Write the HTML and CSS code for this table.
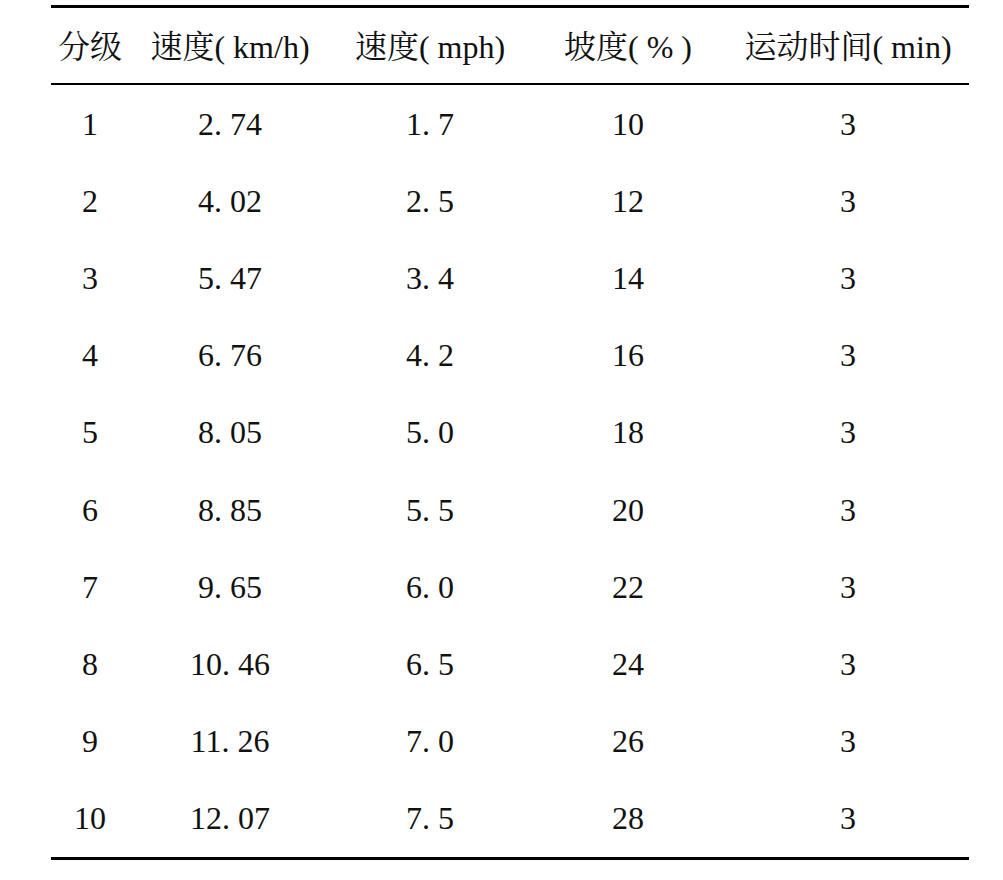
FILE: index.html
```html
<!DOCTYPE html>
<html lang="zh">
<head>
<meta charset="utf-8">
<title>分级运动方案</title>
<link rel="stylesheet" href="styles.css">
</head>
<body>
<table class="grade-table">
  <colgroup>
    <col class="c1"><col class="c2"><col class="c3"><col class="c4"><col class="c5">
  </colgroup>
  <thead>
    <tr>
      <th>分级</th>
      <th>速度<span class="latin">( km/h)</span></th>
      <th>速度<span class="latin">( mph)</span></th>
      <th>坡度<span class="latin">( % )</span></th>
      <th>运动时间<span class="latin">( min)</span></th>
    </tr>
  </thead>
  <tbody>
    <tr><td>1</td><td>2. 74</td><td>1. 7</td><td>10</td><td>3</td></tr>
    <tr><td>2</td><td>4. 02</td><td>2. 5</td><td>12</td><td>3</td></tr>
    <tr><td>3</td><td>5. 47</td><td>3. 4</td><td>14</td><td>3</td></tr>
    <tr><td>4</td><td>6. 76</td><td>4. 2</td><td>16</td><td>3</td></tr>
    <tr><td>5</td><td>8. 05</td><td>5. 0</td><td>18</td><td>3</td></tr>
    <tr><td>6</td><td>8. 85</td><td>5. 5</td><td>20</td><td>3</td></tr>
    <tr><td>7</td><td>9. 65</td><td>6. 0</td><td>22</td><td>3</td></tr>
    <tr><td>8</td><td>10. 46</td><td>6. 5</td><td>24</td><td>3</td></tr>
    <tr><td>9</td><td>11. 26</td><td>7. 0</td><td>26</td><td>3</td></tr>
    <tr><td>10</td><td>12. 07</td><td>7. 5</td><td>28</td><td>3</td></tr>
  </tbody>
</table>
</body>
</html>
```

FILE: styles.css
```css
html, body {
  margin: 0;
  padding: 0;
  background: #ffffff;
}

body {
  padding: 5px 0 0 51px;
  font-family: "Liberation Serif", "Noto Serif CJK SC", "Noto Sans CJK SC", serif;
  color: #111111;
}

.grade-table {
  width: 918px;
  border-collapse: collapse;
  table-layout: fixed;
  font-size: 32px;
  border-top: 3px solid #000000;
  border-bottom: 3px solid #000000;
}

.c1 { width: 78px; }
.c2 { width: 202px; }
.c3 { width: 198px; }
.c4 { width: 198px; }
.c5 { width: 242px; }

.grade-table th {
  font-weight: 400;
  height: 73px;
  padding: 2px 0 0 0;
  text-align: center;
  white-space: nowrap;
  border-bottom: 2px solid #000000;
  line-height: 1;
}

.latin {
  font-family: "Liberation Serif", serif;
}

.grade-table td {
  height: 77.2px;
  padding: 0;
  text-align: center;
  white-space: pre;
  line-height: 1;
}
```
